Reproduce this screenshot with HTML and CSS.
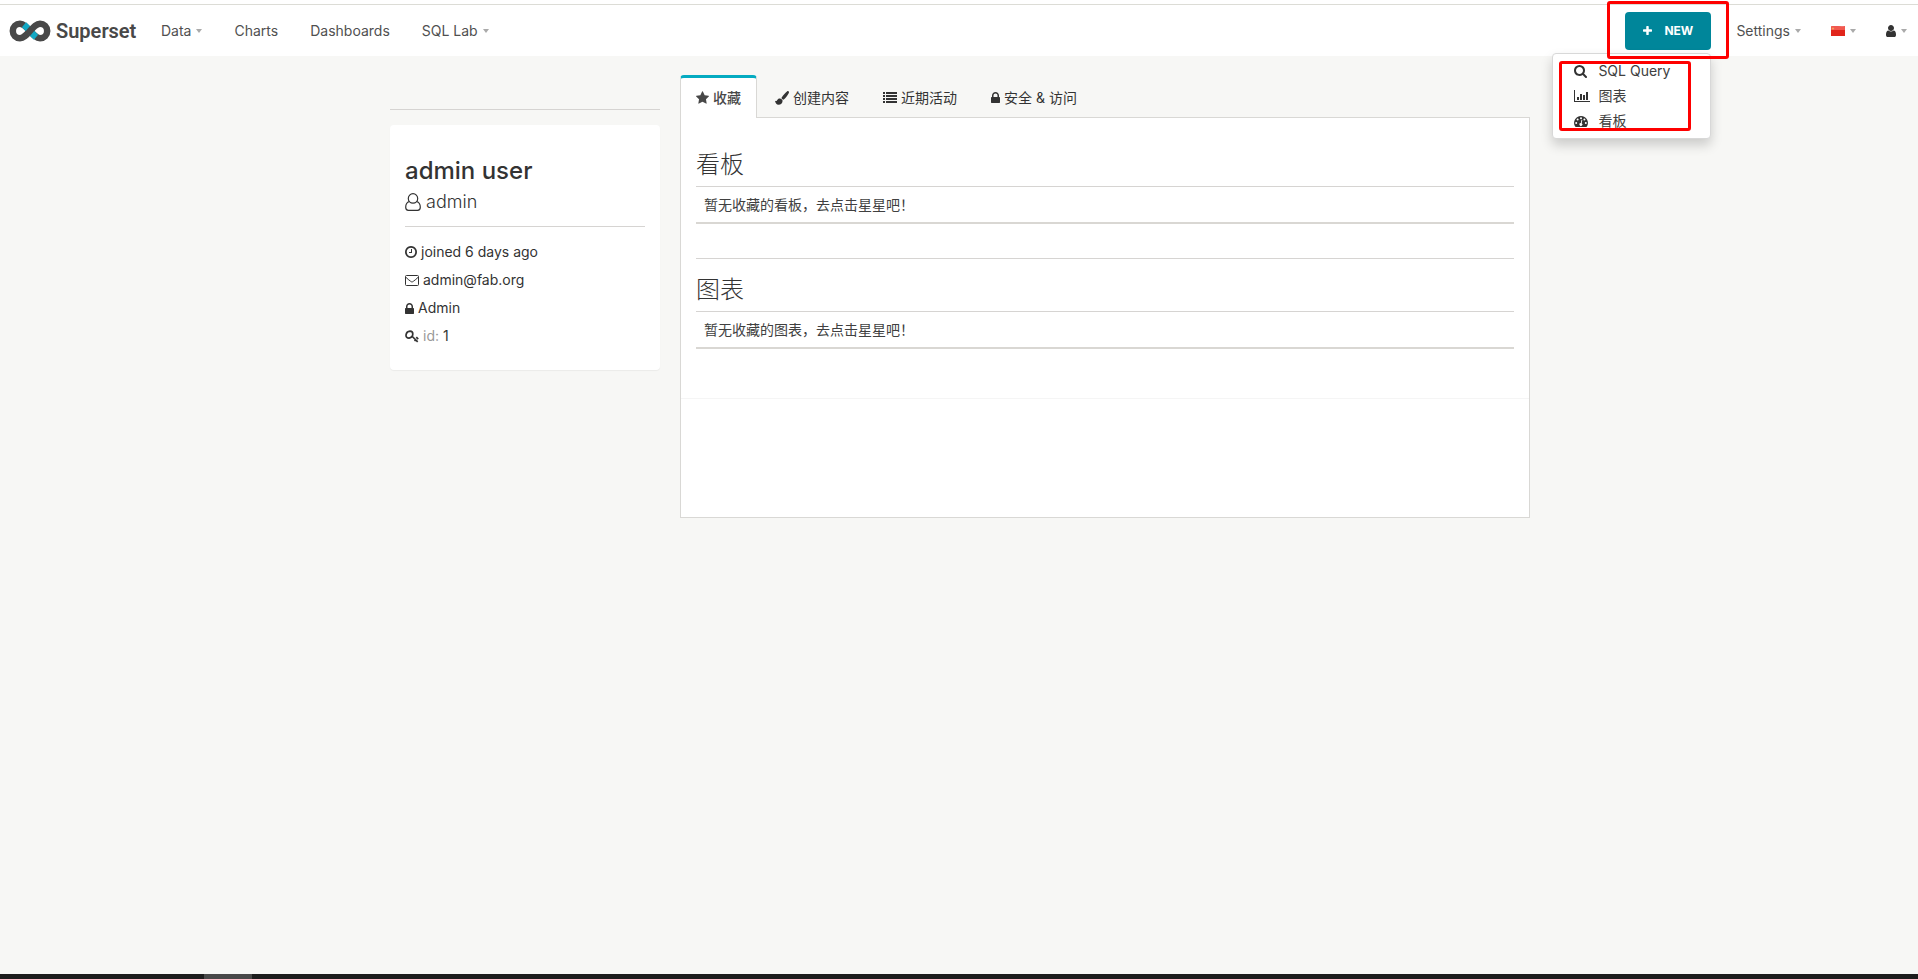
FILE: index.html
```html
<!DOCTYPE html>
<html lang="zh">
<head>
<meta charset="utf-8">
<title>Superset</title>
<link rel="stylesheet" href="styles.css">
</head>
<body>
<svg class="defs" aria-hidden="true">
  <symbol id="search" viewBox="64 128 1664 1664"><path d="M1216 832q0-185-131.500-316.500t-316.500-131.500-316.500 131.500-131.500 316.500 131.500 316.500 316.500 131.500 316.500-131.500 131.500-316.500zm512 832q0 52-38 90t-90 38q-54 0-90-38l-343-342q-179 124-399 124-143 0-273.500-55.500t-225-150-150-225-55.500-273.500 55.500-273.500 150-225 225-150 273.500-55.500 273.500 55.500 225 150 150 225 55.500 273.500q0 220-124 399l343 343q37 37 37 90z"/></symbol>
  <symbol id="lock" viewBox="320 128 1152 1408"><path d="M640 768h512v-192q0-106-75-181t-181-75-181 75-75 181v192zm832 96v576q0 40-28 68t-68 28h-960q-40 0-68-28t-28-68v-576q0-40 28-68t68-28h32v-192q0-184 132-316t316-132 316 132 132 316v192h32q40 0 68 28t28 68z"/></symbol>
  <symbol id="star" viewBox="64 32 1664 1587"><path d="M1728 647q0 22-26 48l-363 354 86 500q1 7 1 20 0 21-10.500 35.500t-30.500 14.500q-19 0-40-12l-449-236-449 236q-22 12-40 12-21 0-31.500-14.500t-10.500-35.500q0-6 2-20l86-500-364-354q-25-27-25-48 0-37 56-46l502-73 225-455q19-41 49-41t49 41l225 455 502 73q56 9 56 46z"/></symbol>
  <symbol id="plus" viewBox="192 128 1408 1408"><path d="M1600 736v192q0 40-28 68t-68 28h-416v416q0 40-28 68t-68 28h-192q-40 0-68-28t-28-68v-416h-416q-40 0-68-28t-28-68v-192q0-40 28-68t68-28h416v-416q0-40 28-68t68-28h192q40 0 68 28t28 68v416h416q40 0 68 28t28 68z"/></symbol>
  <symbol id="clock" viewBox="128 128 1536 1536"><path d="M1024 544v448q0 14-9 23t-23 9h-320q-14 0-23-9t-9-23v-64q0-14 9-23t23-9h224v-352q0-14 9-23t23-9h64q14 0 23 9t9 23zm416 352q0-148-73-273t-198-198-273-73-273 73-198 198-73 273 73 273 198 198 273 73 273-73 198-198 73-273zm224 0q0 209-103 385.500t-279.500 279.500-385.500 103-385.500-103-279.500-279.500-103-385.500 103-385.500 279.500-279.500 385.500-103 385.500 103 279.500 279.500 103 385.500z"/></symbol>
  <symbol id="user" viewBox="256 128 1280 1536"><path d="M1536 1399q0 109-62.500 187t-150.500 78h-854q-88 0-150.500-78t-62.500-187q0-85 8.500-160.500t31.500-152 58.500-131 94-89 134.500-34.500q131 128 313 128t313-128q76 0 134.500 34.500t94 89 58.500 131 31.500 152 8.500 160.500zm-256-887q0 159-112.500 271.500t-271.500 112.500-271.500-112.500-112.500-271.500 112.500-271.500 271.500-112.500 271.500 112.500 112.500 271.500z"/></symbol>
  <symbol id="user-o" viewBox="0 0 16 18"><g fill="none" stroke="currentColor" stroke-width="1.200"><circle cx="8" cy="5.400" r="4.700"/><path d="M4.400 8.500C1.800 9.200.7 11.800.7 14.300c0 1.700 1.200 3 2.700 3h9.200c1.500 0 2.700-1.300 2.700-3 0-2.500-1.100-5.100-3.700-5.800"/></g></symbol>
  <symbol id="mail" viewBox="0 0 14 11"><g fill="none" stroke="currentColor"><rect x=".5" y=".5" width="13" height="10" rx="1"/><path d="M.8 2.200C2.500 4 4 5 5.500 6.200c1.200 1 1.800 1 3 0C10 5 11.500 4 13.200 2.200"/></g></symbol>
  <symbol id="key" viewBox="0 0 14 13"><g fill="none" stroke="currentColor" stroke-width="1.700" stroke-linejoin="round"><path d="M7.800 3.900c0 2-1.500 3.600-3.700 4.200C2.200 8.200 1 7.200 1 5.200 1.300 2.800 3 1.200 5 1.100c1.800 0 2.800 1.100 2.800 2.800z"/><path d="M6.800 6l5.900 5.800M9.500 11l1.700-1.600M11.300 7.200l1.900 2" /></g></symbol>
  <symbol id="brush" viewBox="0 0 14 14"><path d="M13.500.3c.6.5.6 1.100.2 1.900-1.300 2.400-3 4.800-4.900 6.300-.5.300-1 .1-1.600-.5C6.500 7.400 6.300 7 6.700 6.400 8.200 4.300 10.100 2 12 .5c.6-.5 1.100-.5 1.500-.2zM5.600 7.700c.9.200 1.800 1.100 2 2-.1 2.600-1.800 4-4 4C1.300 13.700.4 12 0 9.700c.5.300 1 .5 1.500.2.700-.5.900-1.400 1.700-1.900.7-.5 1.500-.5 2.400-.3z"/></symbol>
  <symbol id="list" viewBox="0 0 14 11"><path d="M0 0h2v2H0zM3 0h11v2H3zM0 3h2v2H0zM3 3h11v2H3zM0 6h2v2H0zM3 6h11v2H3zM0 9h2v2H0zM3 9h11v2H3z"/></symbol>
  <symbol id="chart" viewBox="0 0 16 12"><path d="M0 0h1v11h15v1H0zM3 7h2v3H3zM6 4h2v6H6zM9 5h2v5H9zM12 2h2v8h-2z"/></symbol>
  <symbol id="gauge" viewBox="0 0 14 11"><path d="M7 0a7 7 0 0 1 5.900 10.600c-.2.300-.4.400-.7.400H1.800c-.3 0-.5-.1-.7-.4A7 7 0 0 1 7 0z"/><g fill="#fff"><circle cx="2.200" cy="7" r="1"/><circle cx="3.600" cy="3.600" r="1"/><circle cx="7" cy="2.200" r="1"/><circle cx="10.400" cy="3.600" r="1"/><circle cx="11.800" cy="7" r="1"/><path d="M7.500 3.800l.8.200-.6 3.200a1.500 1.500 0 1 1-.9-.2z"/></g></symbol>
  <symbol id="flag" viewBox="0 0 14 10"><path fill="#e1251b" d="M0 .5C4-.3 9 .8 14 .2V10H0z"/><path fill="#f2584f" d="M0 .5C4-.3 9 .8 14 .2V4H0z"/><path fill="#f7a65b" d="M2 1l.5 1 1 .1-.8.7.2 1L2 3.300l-.9.500.2-1-.8-.7 1-.1z"/></symbol>
</svg>

<header class="navbar">
  <a class="brand" href="#">
    <svg class="mark" viewBox="0 0 42 22" aria-hidden="true">
      <g fill="none" stroke-width="6.500">
        <path stroke="#484848" d="M21 11C17 6.500 14.500 3.800 11 3.800a7.200 7.200 0 0 0 0 14.400c3.500 0 6-2.700 10-7.200s6.500-7.200 10-7.200a7.200 7.200 0 0 1 0 14.400c-3.500 0-6-2.700-10-7.200z"/>
        <path stroke="#12a8c4" d="M15 4.800C17 6.500 19.200 9 21 11s4 4.500 6 6.200"/>
        <path stroke="#484848" d="M18.500 13.800L23.500 8.200"/>
      </g>
    </svg>
    <span>Superset</span>
  </a>
  <nav class="menu">
    <a href="#">Data<i class="caret"></i></a>
    <a href="#">Charts</a>
    <a href="#">Dashboards</a>
    <a href="#">SQL Lab<i class="caret"></i></a>
  </nav>
  <div class="actions">
    <div class="new">
      <button class="new-button" type="button"><svg class="plus"><use href="#plus"/></svg>NEW</button>
      <div class="dropdown">
        <a href="#"><svg class="s13"><use href="#search"/></svg>SQL Query</a>
        <a href="#"><svg class="chart"><use href="#chart"/></svg>图表</a>
        <a href="#"><svg class="wide"><use href="#gauge"/></svg>看板</a>
        <span class="mark-box mark-menu"></span>
      </div>
      <span class="mark-box mark-new"></span>
    </div>
    <a class="settings" href="#">Settings<i class="caret"></i></a>
    <a class="language" href="#" aria-label="中文"><svg class="flag"><use href="#flag"/></svg><i class="caret"></i></a>
    <a href="#" aria-label="admin"><svg class="person"><use href="#user"/></svg><i class="caret"></i></a>
  </div>
</header>

<main class="profile">
  <aside>
    <hr>
    <section class="card">
      <h3>admin user</h3>
      <h4><svg class="user-o"><use href="#user-o"/></svg>admin</h4>
      <hr>
      <p><svg class="s12"><use href="#clock"/></svg>joined 6 days ago</p>
      <p><svg class="wide"><use href="#mail"/></svg>admin@fab.org</p>
      <p><svg class="lock"><use href="#lock"/></svg>Admin</p>
      <p><svg class="key"><use href="#key"/></svg><span class="muted">id:</span> 1</p>
    </section>
  </aside>
  <div class="content">
    <nav class="tabs">
      <a class="tab active" href="#"><svg class="s13"><use href="#star"/></svg>收藏</a>
      <a class="tab" href="#"><svg class="brush"><use href="#brush"/></svg>创建内容</a>
      <a class="tab" href="#"><svg class="wide"><use href="#list"/></svg>近期活动</a>
      <a class="tab" href="#"><svg class="lock"><use href="#lock"/></svg>安全 &amp; 访问</a>
    </nav>
    <div class="panel">
      <div class="favorites">
        <h2>看板</h2>
        <table><tbody><tr><td>暂无收藏的看板，去点击星星吧！</td></tr></tbody></table>
        <hr>
        <h2>图表</h2>
        <table><tbody><tr><td>暂无收藏的图表，去点击星星吧！</td></tr></tbody></table>
      </div>
    </div>
  </div>
</main>
<footer class="taskbar"><span></span></footer>
</body>
</html>
```
FILE: styles.css
```css
* { box-sizing: border-box; }
body {
  margin: 0;
  min-height: 100vh;
  display: flex;
  flex-direction: column;
  background: #f7f7f5;
  color: #333;
  font: 400 14px/20px Inter, "Noto Sans CJK SC", sans-serif;
}
a { color: inherit; text-decoration: none; }
svg { flex: none; fill: currentColor; }
hr { margin: 0; border: 0; border-top: 1px solid #d6d4d2; }
.defs { position: absolute; width: 0; height: 0; }
.s12 { width: 12px; height: 12px; }
.s13 { width: 13px; height: 13px; }
.wide { width: 14px; height: 11px; }
.lock { width: 9px; height: 11px; }
.key { width: 14px; height: 13px; }
.brush { width: 14px; height: 14px; }
.chart { width: 16px; height: 12px; }
.plus { width: 9px; height: 9px; }
.flag { width: 14px; height: 10px; }
.person { width: 10px; height: 12px; color: #333; }
.user-o { width: 16px; height: 18px; }

.navbar {
  display: flex;
  align-items: center;
  height: 56px;
  padding: 5px 11px 0 9px;
  background: linear-gradient(#fff 4px, #dcdcd6 4px, #dcdcd6 5px, #fff 5px);
}
.brand { display: flex; align-items: center; gap: 5px; width: 152px; color: #484848; font: 600 20px/24px Roboto, sans-serif; }
.mark { width: 42px; height: 22px; }
.menu { display: flex; gap: 32px; }
.menu a, .actions > a { display: flex; align-items: center; color: #505050; }
.caret { margin-left: 5px; border: 3px solid transparent; border-top: 4px solid #aaa; border-bottom: 0; }
.actions { display: flex; align-items: center; margin-left: auto; }
.new { position: relative; margin-right: 25px; }
.new-button {
  display: flex;
  align-items: center;
  justify-content: center;
  gap: 12px;
  width: 86px;
  height: 38px;
  border: 0;
  border-radius: 4px;
  background: #00869a;
  color: #fff;
  font: 700 12px/20px Inter, sans-serif;
}
.settings { margin-right: 30px; }
.language { margin-right: 30px; }
.dropdown {
  position: absolute;
  top: 41px;
  right: 0;
  width: 159px;
  padding: 5px 0 4px;
  border: 1px solid #d8d8d8;
  border-radius: 4px;
  background: #fff;
  box-shadow: 0 6px 12px rgba(0, 0, 0, .18);
  color: #404040;
}
.dropdown a { display: grid; grid-template-columns: 16px 1fr; align-items: center; gap: 8px; height: 25px; padding-left: 21px; white-space: nowrap; }
.dropdown svg { color: #333; }
.mark-box { position: absolute; border: 3px solid #fe0000; border-radius: 3px; pointer-events: none; }
.mark-new { top: -11px; left: -18px; width: 122px; height: 58px; }
.mark-menu { top: 7px; left: 6px; width: 132px; height: 70px; }

.profile {
  display: grid;
  grid-template-columns: 270px 1fr;
  gap: 20px;
  width: 100%;
  max-width: 1142px;
  margin: 0 auto;
  padding: 19px 0 0 2px;
}
aside { padding-top: 34px; }
.card { margin-top: 15px; padding: 30px 15px 24px; border-radius: 4px; background: #fff; box-shadow: 0 1px 1px rgba(0, 0, 0, .05); }
h2, h3, h4, p { margin: 0; }
h3 { font-size: 24px; line-height: 32px; font-weight: 500; }
h4 { display: flex; align-items: center; gap: 5px; margin: 5px 0 14px; font-size: 18px; line-height: 20px; font-weight: 300; }
.card p { display: flex; align-items: center; gap: 4px; margin-top: 8px; }
.card hr + p { margin-top: 15px; }
.muted { color: #999; }

.tabs { display: flex; gap: 2px; margin-bottom: -1px; }
.tab { display: flex; align-items: center; gap: 4px; height: 43px; padding: 1px 15px 0; border: 1px solid transparent; border-bottom: 0; }
.tab.active { padding: 0 15px 1px; border-color: #d9d8d5; border-top: 3px solid #05abc1; border-radius: 4px 4px 0 0; background: #fff; color: #484848; font-weight: 500; }
.panel { min-height: 401px; border: 1px solid #d9d8d5; background: #fff; }
.favorites { padding: 33px 15px 49px; border-bottom: 1px solid #f5f5f5; }
h2 { margin-bottom: 7px; font-size: 24px; line-height: 28px; font-weight: 300; }
table { width: 100%; border-collapse: separate; border-spacing: 0; border-top: 1px solid #d6d4d2; border-bottom: 2px solid #d9d7d3; color: #404040; }
td { padding: 8px 8px 7px; }
.favorites hr { margin: 34px 0 17px; }

.taskbar { height: 5px; margin-top: auto; padding-left: 204px; background: #1c1c1c; }
.taskbar span { display: block; width: 48px; height: 5px; background: #484848; }
```
